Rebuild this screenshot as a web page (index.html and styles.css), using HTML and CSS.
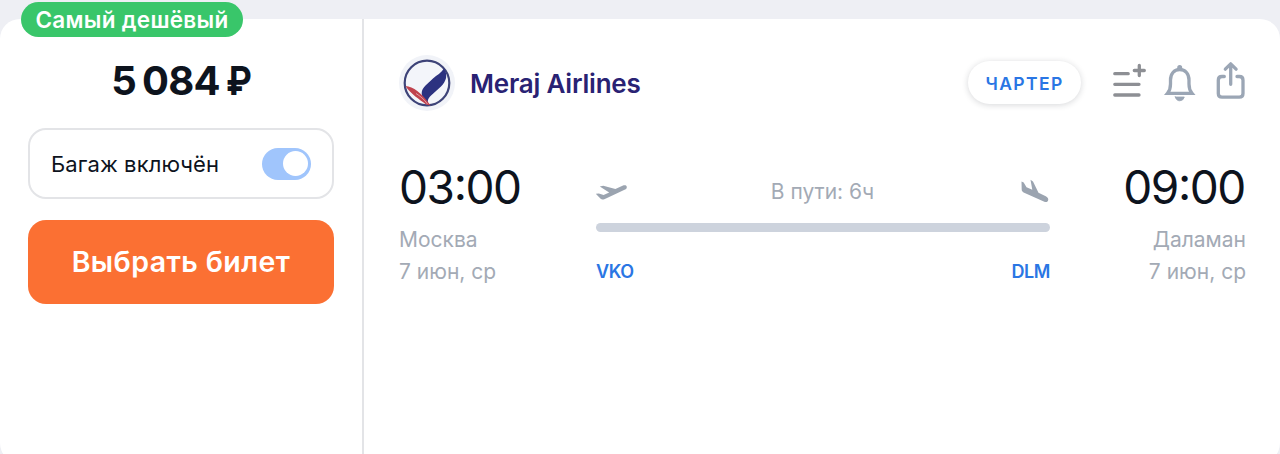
FILE: index.html
```html
<!DOCTYPE html>
<html lang="ru">
<head>
<meta charset="utf-8">
<title>Meraj Airlines</title>
<link rel="stylesheet" href="styles.css">
</head>
<body>
<article class="ticket">
  <span class="badge">Самый дешёвый</span>
  <aside class="offer">
    <div class="price"><span class="price-value">5<span class="price-gap"></span>084</span><span class="price-currency">₽</span></div>
    <div class="baggage">
      <span class="baggage-label">Багаж включён</span>
      <span class="toggle"><span class="knob"></span></span>
    </div>
    <button class="buy">Выбрать билет</button>
  </aside>
  <section class="details">
    <header class="head">
      <svg class="logo" width="56" height="56" viewBox="0 0 56 56">
        <circle cx="28" cy="28" r="28" fill="#f1f3f8"/>
        <circle cx="28" cy="28" r="22.3" fill="#f3f5fa" stroke="#3d4378" stroke-width="2.2"/>
        <path d="M45 13.500C42 18 38 20 34 23.500L26.500 30.500C22 35 22 39 24 42.500L29.500 50C28 46 29 43.500 31.500 41L42 31.500C47.500 26 49 20 45 13.500Z" fill="#2c3280"/>
        <path d="M6.500 31C14 31.500 23 38 31.500 50.500L27 49.500C21 44.500 11.500 39 6.500 31Z" fill="#c0424d"/>
        <path d="M17 38.500C21 41 25 44 28.500 49" stroke="#eec3c8" stroke-width=".7" fill="none"/>
      </svg>
      <span class="airline">Meraj Airlines</span>
      <span class="charter">ЧАРТЕР</span>
      <svg class="actions" width="136" height="44" viewBox="1111 61 136 44" fill="none" stroke-linecap="round" stroke-linejoin="round">
        <path d="M1114.800 73.700H1128.200M1114.800 84.300H1139M1114.800 95H1139M1134.300 70.500H1144.300M1139.300 65.500V75.500" stroke="#8d8f94" stroke-width="3.3"/>
        <g stroke="#9ba6b5" stroke-width="3.3">
          <path d="M1170.500 84V80C1170.500 74 1174 69.500 1179.700 69.500S1189 74 1189 80V84C1189 89 1190 91 1192 93.400H1167.500C1169.500 91 1170.500 89 1170.500 84Z" stroke-linejoin="miter"/>
          <circle cx="1179.700" cy="67.500" r="1.500" fill="#9ba6b5" stroke-width="2"/>
          <path d="M1175.300 97H1184.300Q1183.300 100.800 1179.800 100.800T1175.300 97Z" fill="#9ba6b5" stroke-width=".8"/>
          <path d="M1224.300 76.500H1222Q1218.300 76.500 1218.300 80.200V93.400Q1218.300 97.100 1222 97.100H1239.300Q1243 97.100 1243 93.400V80.200Q1243 76.500 1239.300 76.500H1237"/>
          <path d="M1230.700 84.300V64M1225.300 69.200L1230.700 63.800L1236.100 69.200"/>
        </g>
      </svg>
    </header>
    <div class="route">
      <div class="point">
        <div class="time">03<span class="colon">:</span>00</div>
        <div class="place">Москва</div>
        <div class="date">7 июн, ср</div>
      </div>
      <div class="flight">
        <div class="flight-top">
          <svg class="takeoff" width="33" height="18" viewBox="596 183 33 18" fill="#9ba4b0"><path d="M595.700 194.800L598.800 194.500L603.600 196L609.200 193.500L599.800 187.400L603.200 186.700L615.400 190L622.500 186.800C624.800 185.900 626.800 186.300 626.800 188.200C626.800 189.600 625.700 190.300 624 191L606.500 199.200C604 200.400 602.300 200.800 600.900 200Z"/></svg>
          <span class="duration">В пути: 6ч</span>
          <svg class="landing" width="29" height="24" viewBox="1021 179 29 24" fill="#9ba4b0"><path d="M1021.500 181.400L1023.700 182.600L1026.500 187.200L1032.300 189.800L1030.500 179.800L1033 181.600L1038.500 192.700L1045.800 196.200C1047.900 197.400 1048.800 199 1048 200.800C1047.300 202.400 1045.500 202.200 1043.800 201.400L1025.300 193.300C1022.600 192.100 1021.700 191.200 1021.700 189.500Z"/></svg>
        </div>
        <div class="line"></div>
        <div class="codes"><span>VKO</span><span>DLM</span></div>
      </div>
      <div class="point arrival">
        <div class="time">09<span class="colon">:</span>00</div>
        <div class="place">Даламан</div>
        <div class="date">7 июн, ср</div>
      </div>
    </div>
  </section>
</article>
</body>
</html>
```
FILE: styles.css
```css
* { box-sizing: border-box; }
body {
  margin: 0;
  height: 454px;
  overflow: hidden;
  padding-top: 19px;
  background: #eeeff4;
  font-family: Inter, "Liberation Sans", sans-serif;
  color: #0d131d;
}
.ticket {
  position: relative;
  display: flex;
  height: 444px;
  background: #fff;
  border-radius: 20px;
}
.badge {
  position: absolute;
  left: 21px;
  top: -17px;
  width: 222px;
  height: 35px;
  border-radius: 18px;
  background: #39c66a;
  color: #fff;
  font-size: 22.500px;
  line-height: 35px;
  font-weight: 600;
  letter-spacing: .3px;
  text-align: center;
  white-space: nowrap;
}
.offer {
  width: 364px;
  flex: none;
  padding: 38px 28px 0;
  border-right: 2px solid #e3e4e7;
}
.price {
  display: flex;
  justify-content: center;
  gap: 6px;
  height: 48px;
  line-height: 48px;
  font-size: 40px;
  font-weight: 700;
}
.price-value { letter-spacing: -.8px; }
.price-gap { display: inline-block; width: 6px; }
.price-currency { width: 25px; transform: scaleX(.87); transform-origin: left; }
.baggage {
  display: flex;
  align-items: center;
  justify-content: space-between;
  width: 306px;
  height: 71px;
  margin-top: 23px;
  padding: 0 21px 0 21px;
  border: 2px solid #e3e4e7;
  border-radius: 18px;
  font-size: 22px;
  letter-spacing: .1px;
}
.toggle {
  display: flex;
  justify-content: flex-end;
  width: 49px;
  height: 32px;
  padding: 3.5px 3px;
  border-radius: 16px;
  background: #a0c5fc;
}
.knob { width: 25px; height: 25px; border-radius: 50%; background: #fff; }
.buy {
  display: block;
  width: 306px;
  height: 84px;
  margin-top: 21px;
  padding: 0;
  border: 0;
  border-radius: 18px;
  background: #fb7033;
  color: #fff;
  font: 600 28.500px/84px Inter, sans-serif;
  letter-spacing: .4px;
}
.details { flex: 1; padding: 36px 33px 0 35px; }
.head { display: flex; align-items: center; height: 56px; }
.logo { flex: none; }
.airline {
  margin: 0 0 0 15px;
  font-size: 26px;
  font-weight: 600;
  letter-spacing: -.2px;
  color: #292273;
}
.charter {
  width: 113px;
  height: 43px;
  margin: -2px 0 0 auto;
  border-radius: 22px;
  background: #fff;
  box-shadow: 0 1px 6px rgba(30, 35, 45, .18);
  color: #2a76e4;
  font-size: 17.500px;
  font-weight: 600;
  line-height: 45px;
  letter-spacing: 1.4px;
  text-align: center;
}
.actions { flex: none; margin: -1px 0 0 30px; }
.route { display: flex; padding-top: 48px; }
.point { flex: none; width: 197px; white-space: nowrap; }
.arrival { width: 196px; text-align: right; }
.time { height: 56px; line-height: 56px; font-size: 46px; letter-spacing: -1.4px; }
.colon { display: inline-block; transform: translateY(-4px); }
.arrival .time { padding-right: 1px; }
.place, .date { height: 32px; line-height: 32px; font-size: 21px; color: #a3aab5; }
.place { margin-top: 9px; }
.flight { flex: none; width: 454px; padding-top: 16px; }
.flight-top { display: flex; align-items: center; justify-content: space-between; height: 32px; }
.duration { padding-right: 5px; font-size: 21px; color: #a3aab5; }
.line { height: 9px; margin-top: 16px; border-radius: 5px; background: #cdd3dd; }
.codes {
  display: flex;
  justify-content: space-between;
  margin-top: 24px;
  height: 32px;
  line-height: 32px;
  font-size: 18px;
  font-weight: 600;
  letter-spacing: -.4px;
  color: #2a76e4;
}
```
